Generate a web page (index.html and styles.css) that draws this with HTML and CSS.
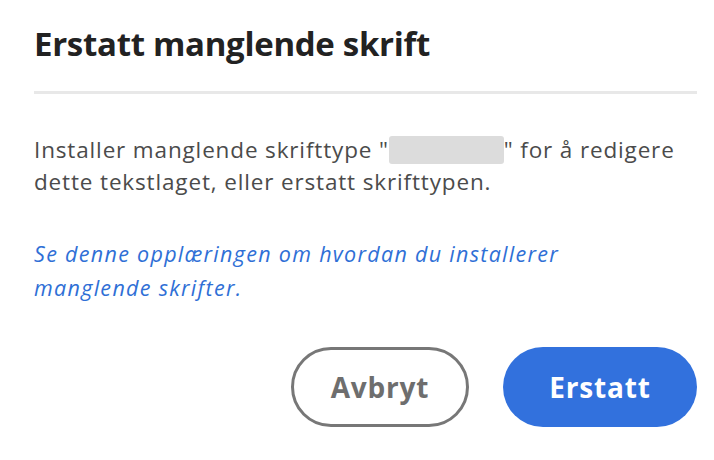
FILE: index.html
```html
<!DOCTYPE html>
<html lang="no">
<head>
 <meta charset="UTF-8">
 <meta name="viewport" content="width=device-width, initial-scale=1.0">
 <title>Erstatt manglende skrift</title>
 <link rel="stylesheet" href="styles.css">
</head>
<body>
 <div class="dialog">
   <h1 class="title">Erstatt manglende skrift</h1>
   <hr class="divider">
   <p class="message">Installer manglende skrifttype "<span class="font-name"></span>" for å redigere dette tekstlaget, eller erstatt skrifttypen.</p>
   <a class="help-link" href="#">Se denne opplæringen om hvordan du installerer manglende skrifter.</a>
   <div class="actions">
     <button class="btn btn-secondary">Avbryt</button>
     <button class="btn btn-primary">Erstatt</button>
   </div>
 </div>
</body>
</html>
```

FILE: styles.css
```css
body { margin: 0; background: #fff; font-family: "Open Sans", Arial, sans-serif; }
.dialog { width: 663px; padding: 22px 17px 0 34px; }
.title { margin: 0; font-size: 33px; font-weight: 700; color: #222; letter-spacing: -0.3px; line-height: 44px; }
.divider { margin: 25px 0 0; border: none; height: 3px; background: #e8e8e8; }
.message { margin: 40px 0 0; font-size: 22.5px; line-height: 32px; color: #4b4b4b; letter-spacing: 0.85px; width: 663px; }
.font-name { display: inline-block; width: 115px; height: 28px; vertical-align: -6px; background: #dcdcdc; border-radius: 3px; }
.help-link { display: block; margin-top: 39px; width: 560px; font-size: 21.5px; line-height: 34px; font-style: italic; color: #2f6fd6; text-decoration: none; letter-spacing: 1.3px; }
.actions { display: flex; justify-content: flex-end; gap: 34px; margin-top: 42px; }
.btn { height: 80px; border-radius: 40px; font-family: inherit; font-size: 28px; font-weight: 700; cursor: pointer; letter-spacing: 0.8px; }
.btn-secondary { width: 178px; background: #fff; border: 3px solid #777; color: #6e6e6e; }
.btn-primary { width: 194px; background: #3271dd; border: none; color: #fff; }
```
